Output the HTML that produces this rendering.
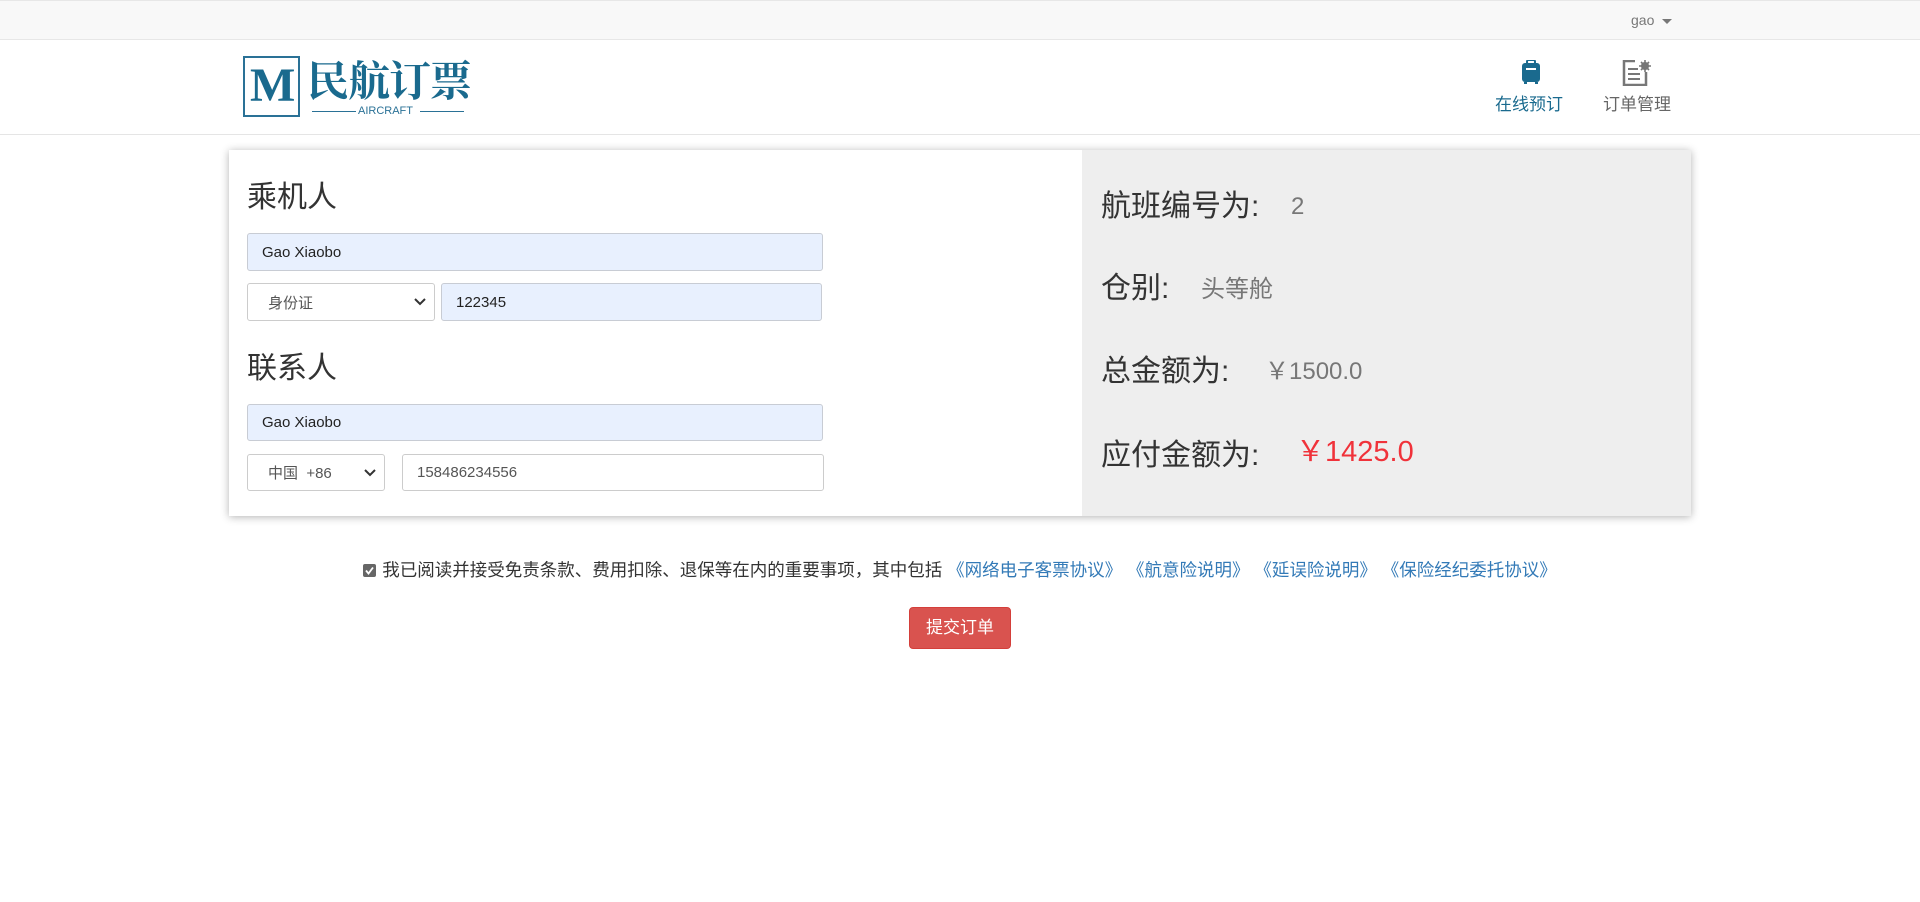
<!DOCTYPE html>
<html><head><meta charset="utf-8"><style>
*{box-sizing:border-box;margin:0;padding:0}
body{width:1920px;height:902px;background:#fff;font-family:"Liberation Sans","Noto Sans CJK SC",sans-serif;color:#333;position:relative;overflow:hidden}
.a{position:absolute}
.top{left:0;top:0;width:1920px;height:40px;background:#f8f8f8;border-top:1px solid #e7e7e7;border-bottom:1px solid #e7e7e7}
.hdr{left:0;top:40px;width:1920px;height:95px;border-bottom:1px solid #e5e5e5}
.card{left:229px;top:150px;width:1462px;height:366px;background:#fff;box-shadow:0 1px 8px rgba(0,0,0,.3)}
.right{left:1082px;top:150px;width:609px;height:366px;background:#eee}
.inp{border:1px solid #ccc;border-radius:3px;font-size:15px;padding-left:14px;display:flex;align-items:center;color:#222}
.blue{background:#e8f0fe;border-color:#c8ccd4}
.sel{color:#555;justify-content:space-between;padding-right:8px}
h2{font-weight:normal;font-size:30px;color:#333}
.lab{font-size:30px;color:#333;left:1101px}
.val{font-size:24px;color:#777}
a{color:#337ab7;text-decoration:none}
</style></head><body>
<div class="a top"></div>
<div class="a" style="left:1631px;top:12px;font-size:14px;color:#777">gao <span style="display:inline-block;border-left:5px solid transparent;border-right:5px solid transparent;border-top:5px solid #777;vertical-align:middle;margin-left:4px"></span></div>
<div class="a hdr"></div>
<!-- logo -->
<div class="a" style="left:243px;top:56px;width:57px;height:61px;border:2px solid #2a7196"></div>
<div class="a" style="left:250px;top:60px;font-family:'Liberation Serif',serif;font-weight:bold;font-size:48px;color:#1a6a8e;line-height:52px">M</div>
<div class="a" style="left:307px;top:54px;font-family:'Noto Serif CJK SC',serif;font-weight:bold;font-size:42px;color:#1a6a8e;line-height:50px;letter-spacing:-1px">民航订票</div>
<div class="a" style="left:312px;top:111px;width:44px;border-top:1px solid #2a7196"></div>
<div class="a" style="left:358px;top:105px;font-size:11px;color:#2a7196">AIRCRAFT</div>
<div class="a" style="left:420px;top:111px;width:44px;border-top:1px solid #2a7196"></div>
<!-- nav -->
<svg class="a" style="left:1520px;top:60px" width="22" height="24" viewBox="0 0 22 24"><rect x="7" y="0" width="8" height="4" rx="1.5" fill="none" stroke="#1a6a8e" stroke-width="2"/><rect x="2" y="3" width="18" height="19" rx="3" fill="#1a6a8e"/><rect x="6" y="8" width="10" height="2" fill="#fff"/><rect x="4" y="22" width="3" height="2" fill="#1a6a8e"/><rect x="15" y="22" width="3" height="2" fill="#1a6a8e"/></svg>
<div class="a" style="left:1495px;top:90px;font-size:17px;color:#1a6a8e">在线预订</div>
<svg class="a" style="left:1622px;top:60px" width="30" height="26" viewBox="0 0 30 26"><path d="M13 1H2v24h22V12" fill="none" stroke="#777" stroke-width="2.5"/><path d="M6 9h10M6 14h12M6 19h12" stroke="#777" stroke-width="2"/><circle cx="23" cy="6" r="4" fill="#777"/><circle cx="23" cy="6" r="1.5" fill="#fff"/><path d="M23 0v12M17 6h12M19 2l8 8M27 2l-8 8" stroke="#777" stroke-width="1.6"/></svg>
<div class="a" style="left:1603px;top:90px;font-size:17px;color:#666">订单管理</div>
<!-- card -->
<div class="a card"></div>
<div class="a right"></div>
<h2 class="a" style="left:247px;top:172px">乘机人</h2>
<div class="a inp blue" style="left:247px;top:233px;width:576px;height:38px">Gao Xiaobo</div>
<div class="a inp sel" style="left:247px;top:283px;width:188px;height:38px;padding-left:20px;background:#fff"><span>身份证</span><svg width="12" height="8"><path d="M1 1l5 5 5-5" fill="none" stroke="#333" stroke-width="2"/></svg></div>
<div class="a inp blue" style="left:441px;top:283px;width:381px;height:38px">122345</div>
<h2 class="a" style="left:247px;top:343px">联系人</h2>
<div class="a inp blue" style="left:247px;top:404px;width:576px;height:37px">Gao Xiaobo</div>
<div class="a inp sel" style="left:247px;top:454px;width:138px;height:37px;padding-left:20px;background:#fff"><span>中国&nbsp; +86</span><svg width="12" height="8"><path d="M1 1l5 5 5-5" fill="none" stroke="#333" stroke-width="2"/></svg></div>
<div class="a inp" style="left:402px;top:454px;width:422px;height:37px;color:#555">158486234556</div>
<div class="a lab" style="top:181px">航班编号为:</div>
<div class="a val" style="left:1291px;top:193px">2</div>
<div class="a lab" style="top:263px">仓别:</div>
<div class="a val" style="left:1201px;top:269px">头等舱</div>
<div class="a lab" style="top:346px">总金额为:</div>
<div class="a val" style="left:1265px;top:351px">￥1500.0</div>
<div class="a lab" style="top:430px">应付金额为:</div>
<div class="a" style="left:1296px;top:428px;font-size:29px;color:#f0323a">￥1425.0</div>
<!-- terms -->
<div class="a" style="left:0;top:557px;width:1920px;text-align:center;font-size:17.5px;color:#333">
<span style="display:inline-block;width:13px;height:13px;background:#666;border-radius:2px;vertical-align:-1px;margin-right:6px;position:relative"><svg width="13" height="13" style="position:absolute;left:0;top:0"><path d="M3 6.5l2.5 3L10 3.5" fill="none" stroke="#fff" stroke-width="1.8"/></svg></span>我已阅读并接受免责条款、费用扣除、退保等在内的重要事项，其中包括 <a>《网络电子客票协议》</a> <a>《航意险说明》</a> <a>《延误险说明》</a> <a>《保险经纪委托协议》</a></div>
<div class="a" style="left:909px;top:607px;width:102px;height:42px;background:#d9534f;border:1px solid #d43f3a;border-radius:4px;color:#fff;font-size:17px;text-align:center;line-height:40px">提交订单</div>
</body></html>
